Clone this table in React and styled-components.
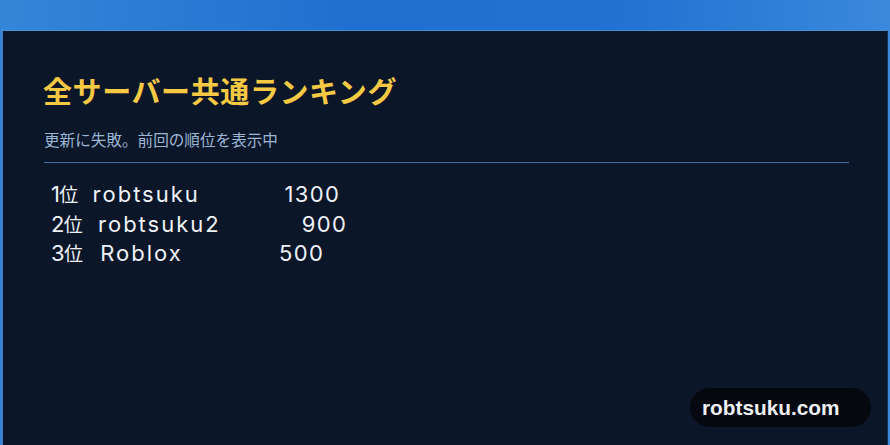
import React from "react";
import styled, { createGlobalStyle } from "styled-components";

const Global = createGlobalStyle`
  html, body { margin: 0; padding: 0; }
  body {
    width: 890px;
    height: 445px;
    overflow: hidden;
    background: #0b1628;
    font-family: Inter, "Noto Sans CJK JP", sans-serif;
  }
`;

const Screen = styled.div`
  position: relative;
  width: 890px;
  height: 445px;
  display: flex;
  flex-direction: column;
  background: linear-gradient(90deg, #3585d8 0%, #1f6fd0 40%, #2172d2 70%, #3a89dc 100%);
`;

const TopBar = styled.div`
  height: 30px;
  flex: none;
`;

const Panel = styled.section`
  flex: 1;
  margin: 0 2px 0 1px;
  background: #0b1628;
  border-top: 1px solid #4b8fd8;
  border-left: 2px solid #3f7fcc;
  border-right: 1px solid #16305a;
  padding: 40px 40px 0 40px;
  display: flex;
  flex-direction: column;
`;

const Title = styled.h1`
  margin: 0;
  font-family: "Noto Sans CJK JP", sans-serif;
  font-weight: 700;
  font-size: 29px;
  line-height: 38px;
  letter-spacing: 0.6px;
  color: #f6c945;
`;

const Subtitle = styled.p`
  margin: 20px 0 0 1px;
  font-family: "Noto Sans CJK JP", sans-serif;
  font-size: 15.6px;
  line-height: 20px;
  color: #9cb6d6;
`;

const Divider = styled.hr`
  margin: 13px 0 0 1px;
  width: 805px;
  border: none;
  height: 1px;
  background: #3c6ea6;
`;

const List = styled.div`
  margin: 17px 0 0 8px;
  display: flex;
  flex-direction: column;
`;

const Row = styled.div`
  display: flex;
  align-items: baseline;
  width: ${(p) => p.$width}px;
  height: 29.5px;
  white-space: nowrap;
  font-family: Inter, "Noto Sans CJK JP", sans-serif;
  font-size: 22px;
  font-weight: 400;
  line-height: 29.5px;
  color: #eef2f8;
`;

const Rank = styled.span`
  flex: none;
  white-space: nowrap;
  letter-spacing: 0.3px;
  & > small {
    font-size: 19px;
    margin-left: -1px;
  }
`;

const Name = styled.span`
  flex: none;
  margin-left: ${(p) => p.$indent}px;
  letter-spacing: 2px;
`;

const Score = styled.span`
  margin-left: auto;
  letter-spacing: 1.4px;
  margin-right: -1.4px;
`;

const Badge = styled.div`
  position: absolute;
  left: 690px;
  top: 388px;
  width: 181px;
  height: 39px;
  border-radius: 20px;
  background: #05080f;
  display: flex;
  align-items: center;
  padding-left: 12px;
  box-sizing: border-box;
  font-family: "Liberation Sans", Arial, sans-serif;
  font-weight: 700;
  font-size: 20.8px;
  color: #eef0f4;
`;

const rows = [
  { n: "1", name: "robtsuku", score: "1300", indent: 14, width: 288 },
  { n: "2", name: "robtsuku2", score: "900", indent: 15, width: 295 },
  { n: "3", name: "Roblox", score: "500", indent: 17, width: 272 },
];

export default function App() {
  return (
    <>
      <Global />
      <Screen>
        <TopBar />
        <Panel>
          <Title>全サーバー共通ランキング</Title>
          <Subtitle>更新に失敗。前回の順位を表示中</Subtitle>
          <Divider />
          <List>
            {rows.map((r) => (
              <Row key={r.n} $width={r.width}>
                <Rank>
                  {r.n}
                  <small>位</small>
                </Rank>
                <Name $indent={r.indent}>{r.name}</Name>
                <Score>{r.score}</Score>
              </Row>
            ))}
          </List>
        </Panel>
        <Badge>robtsuku.com</Badge>
      </Screen>
    </>
  );
}
